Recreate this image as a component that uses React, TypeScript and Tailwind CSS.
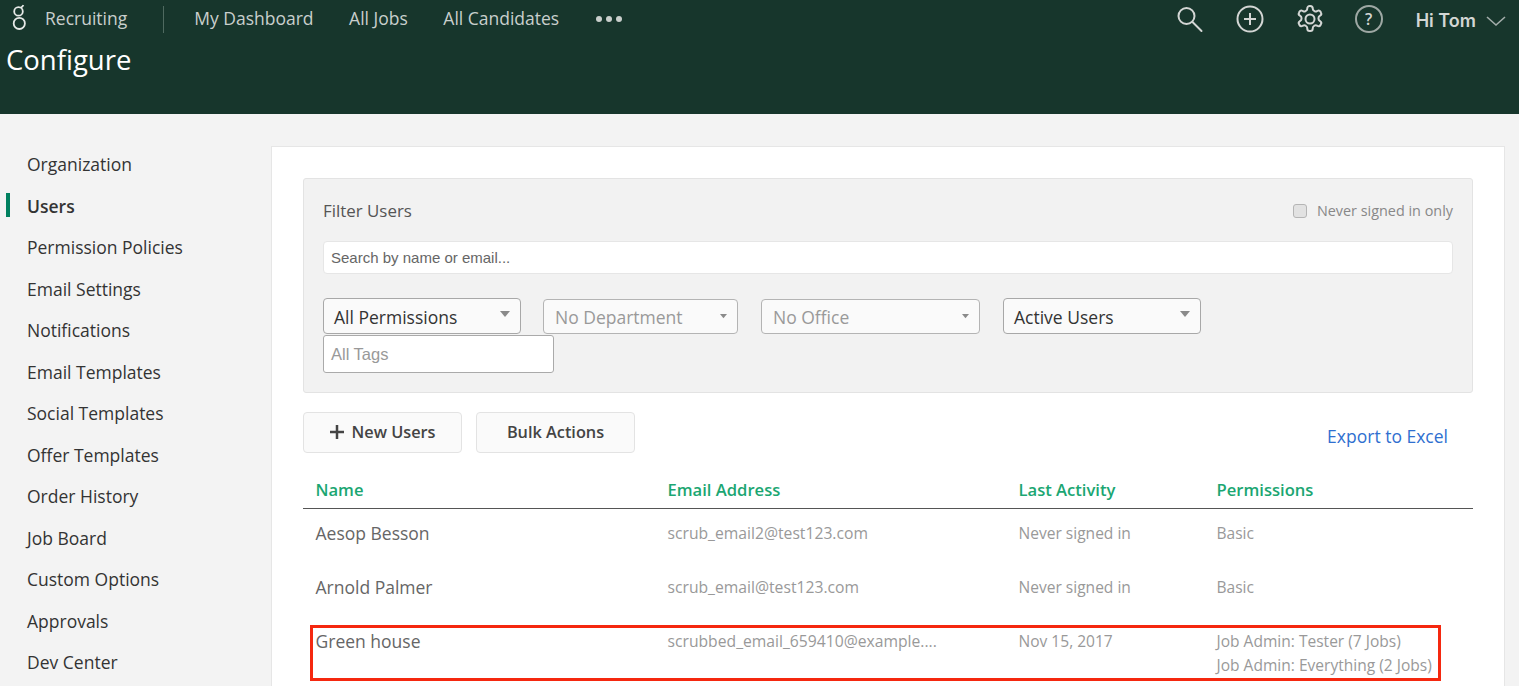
import React from "react";

const nav = ["Organization","Users","Permission Policies","Email Settings","Notifications","Email Templates","Social Templates","Offer Templates","Order History","Job Board","Custom Options","Approvals","Dev Center"];

function Caret({ c = "#8a8a8a", w = 10 }: { c?: string; w?: number }) {
  return (
    <svg width={w} height={w * 0.6} viewBox="0 0 10 6" className="shrink-0">
      <path d="M0 0h10L5 6z" fill={c} />
    </svg>
  );
}

function Select({ label, w, active, y }: { label: string; w: string; active?: boolean; y?: string }) {
  return (
    <div className={`${w} ${y ?? ""} ${active ? "h-9 border-[#a8a8a8] pl-[10px] text-[#333]" : "h-[35px] border-[#b4b4b4] pl-[11px] text-[#999]"} flex shrink-0 items-center justify-between rounded-sm border bg-[#fafafa] pr-[10px] pt-[2px] text-[17.5px]`}>
      <span>{label}</span>
      <span className={active ? "-mt-[7px]" : "-mt-[2px]"}><Caret w={active ? 10 : 7} /></span>
    </div>
  );
}

function Row({ name, email, act, perm, h }: { name: string; email: string; act: string; perm: string[]; h: string }) {
  return (
    <div className={`grid grid-cols-[352px_351px_198px_1fr] pl-[12.5px] ${h}`}>
      <div className="text-[17.5px] leading-[24px] text-[#666]">{name}</div>
      <div className="text-[15.7px] leading-[24px] text-[#999]">{email}</div>
      <div className="text-[15.55px] leading-[24px] text-[#999]">{act}</div>
      <div className="text-[15.55px] leading-[24px] text-[#999]">
        {perm.map((p) => <div key={p}>{p}</div>)}
      </div>
    </div>
  );
}

export default function App() {
  return (
    <div className="h-[686px] w-[1519px] overflow-hidden bg-[#f3f3f3] font-['Open_Sans',sans-serif]">
      <header className="h-[114px] bg-[#17362c]">
        <div className="flex h-[37px] items-center">
          <svg width="18" height="30" viewBox="0 0 18 30" className="ml-[9.5px] mt-[1px]" fill="none" stroke="#e6e9e7" strokeWidth="1.8">
            <circle cx="8.5" cy="7.4" r="4.3" />
            <circle cx="9.3" cy="19.4" r="5.6" />
            <path d="M10.8 3.6c.9-.3 1.9-1 2.6-2.4" />
          </svg>
          <span className="ml-[17.5px] text-[17.5px] text-[#c9cfcc]">Recruiting</span>
          <div className="ml-[36px] mt-[2px] h-[27px] w-px bg-[#4f6a60]" />
          <nav className="ml-[30px] flex items-center gap-[35.5px] text-[17.5px] text-[#c9cfcc]">
            <span>My Dashboard</span>
            <span>All Jobs</span>
            <span>All Candidates</span>
            <span className="ml-[1px] flex gap-[4px]">
              <i className="size-[6px] rounded-full bg-[#c9cfcc]" />
              <i className="size-[6px] rounded-full bg-[#c9cfcc]" />
              <i className="size-[6px] rounded-full bg-[#c9cfcc]" />
            </span>
          </nav>
          <div className="ml-auto flex items-center text-[#d3d6d4]">
            <svg width="28" height="28" viewBox="0 0 28 28" fill="none" stroke="currentColor" strokeWidth="2">
              <circle cx="11.5" cy="11" r="8" /><path d="M17.5 17l9 9" strokeLinecap="round" />
            </svg>
            <svg width="28" height="28" viewBox="0 0 28 28" className="ml-[33px]" fill="none" stroke="currentColor" strokeWidth="2">
              <circle cx="14" cy="14" r="12.5" /><path d="M14 8v12M8 14h12" />
            </svg>
            <svg width="30" height="30" viewBox="0 0 24 24" className="ml-[31px]" fill="none" stroke="currentColor" strokeWidth="1.6" strokeLinejoin="round">
              <circle cx="12" cy="12" r="3.6" />
              <path d="M12.2 1.5h-.4a2 2 0 0 0-2 2v.2a2 2 0 0 1-1 1.7l-.4.3a2 2 0 0 1-2 0l-.2-.1a2 2 0 0 0-2.7.7l-.2.4a2 2 0 0 0 .7 2.7l.2.1a2 2 0 0 1 1 1.7v.6a2 2 0 0 1-1 1.7l-.2.1a2 2 0 0 0-.7 2.7l.2.4a2 2 0 0 0 2.7.7l.2-.1a2 2 0 0 1 2 0l.4.3a2 2 0 0 1 1 1.7v.2a2 2 0 0 0 2 2h.4a2 2 0 0 0 2-2v-.2a2 2 0 0 1 1-1.7l.4-.3a2 2 0 0 1 2 0l.2.1a2 2 0 0 0 2.7-.7l.2-.4a2 2 0 0 0-.7-2.7l-.2-.1a2 2 0 0 1-1-1.7v-.6a2 2 0 0 1 1-1.7l.2-.1a2 2 0 0 0 .7-2.7l-.2-.4a2 2 0 0 0-2.7-.7l-.2.1a2 2 0 0 1-2 0l-.4-.3a2 2 0 0 1-1-1.7v-.2a2 2 0 0 0-2-2z" />
            </svg>
            <div className="ml-[30px] flex size-[28px] items-center justify-center rounded-full border-2 border-[#9ea8a4] text-[16px] font-semibold leading-none">?</div>
            <span className="ml-[33px] mt-[3px] font-['Inter',sans-serif] text-[18px] font-semibold text-[#d3d6d4]">Hi Tom</span>
            <svg width="20" height="11" viewBox="0 0 20 11" className="ml-[10px] mr-[13px] mt-[6px]" fill="none" stroke="#a3adaa" strokeWidth="1.6">
              <path d="M1 1l9 8 9-8" />
            </svg>
          </div>
        </div>
        <h1 className="ml-[6px] text-[27.5px] font-normal leading-[46px] text-white">Configure</h1>
      </header>

      <div className="flex pt-[32px]">
        <aside className="w-[271px] shrink-0">
          <ul className="-mt-[2.3px]">
            {nav.map((n) => (
              <li key={n} className="relative flex h-[41.5px] items-center pl-[27px]">
                {n === "Users" && <span className="absolute left-[6px] top-[8px] h-6 w-1 bg-[#00805f]" />}
                <span className={n === "Users" ? "text-[17.5px] font-semibold text-[#333]" : "text-[17.5px] text-[#333]"}>{n}</span>
              </li>
            ))}
          </ul>
        </aside>

        <main className="mr-[14px] h-[600px] flex-1 border border-[#e6e6e6] bg-white pl-[31px] pr-[31px] pt-[31px]">
          <section className="h-[215px] rounded-[3px] border border-[#e3e3e3] bg-[#f2f2f2] px-[19px]">
            <div className="flex h-[62px] items-center justify-between pt-[2px]">
              <span className="text-[16.9px] text-[#555]">Filter Users</span>
              <label className="flex items-center text-[14.4px] text-[#888]">
                <span className="mr-[10px] size-[14px] rounded-[3px] border border-[#b5b5b5] bg-[#e2e2e2]" />
                Never signed in only
              </label>
            </div>
            <div className="flex h-[33px] items-center rounded-sm border border-[#e6e6e6] bg-white pl-[7px] pt-px font-['Liberation_Sans',sans-serif] text-[15px] text-[#666]">
              Search by name or email...
            </div>
            <div className="mt-[24px] flex items-start">
              <Select label="All Permissions" w="w-[198px]" active />
              <Select label="No Department" w="w-[195px]" y="ml-[22px] mt-px" />
              <Select label="No Office" w="w-[219px]" y="ml-[23px] mt-px" />
              <Select label="Active Users" w="w-[198px]" active y="ml-[23px]" />
            </div>
            <div className="mt-px flex h-[38px] w-[231px] items-center rounded-[3px] border border-[#aaa] bg-white pl-[7px] font-['Liberation_Sans',sans-serif] text-[16.5px] text-[#999]">
              All Tags
            </div>
          </section>

          <div className="mt-[19px] flex items-start">
            <button className="flex h-[41px] w-[159px] items-center justify-center rounded-sm border border-[#e3e3e3] bg-[#fafafa] pb-px text-[16.3px] font-semibold text-[#444]">
              <svg width="14" height="14" viewBox="0 0 14 14" className="mr-[8px]"><path d="M7 0v14M0 7h14" stroke="#444" strokeWidth="2.5" /></svg>
              New Users
            </button>
            <button className="ml-[14px] h-[41px] w-[159px] rounded-sm border border-[#e3e3e3] bg-[#fafafa] pb-px text-[16.3px] font-semibold text-[#444]">Bulk Actions</button>
            <a className="ml-auto mr-[25px] mt-[11px] text-[17.5px] text-[#2f6fd0]">Export to Excel</a>
          </div>

          <div className="relative">
            <div className="mt-[20px] grid h-[36px] grid-cols-[352px_351px_198px_1fr] border-b border-[#555] pl-[12.5px] pt-[5px] text-[16.6px] font-semibold leading-[24px] text-[#1ba672]">
              <div>Name</div><div>Email Address</div><div>Last Activity</div><div>Permissions</div>
            </div>
            <div className="pt-[12px]">
              <Row h="h-[54px]" name="Aesop Besson" email="scrub_email2@test123.com" act="Never signed in" perm={["Basic"]} />
              <Row h="h-[54px]" name="Arnold Palmer" email="scrub_email@test123.com" act="Never signed in" perm={["Basic"]} />
              <Row h="h-[60px]" name="Green house" email="scrubbed_email_659410@example...." act="Nov 15, 2017" perm={["Job Admin: Tester (7 Jobs)", "Job Admin: Everything (2 Jobs)"]} />
            </div>
            <div className="absolute left-[7px] top-[152px] h-[56px] w-[1131px] border-[3px] border-[#f5280f]" />
          </div>
        </main>
      </div>
    </div>
  );
}
